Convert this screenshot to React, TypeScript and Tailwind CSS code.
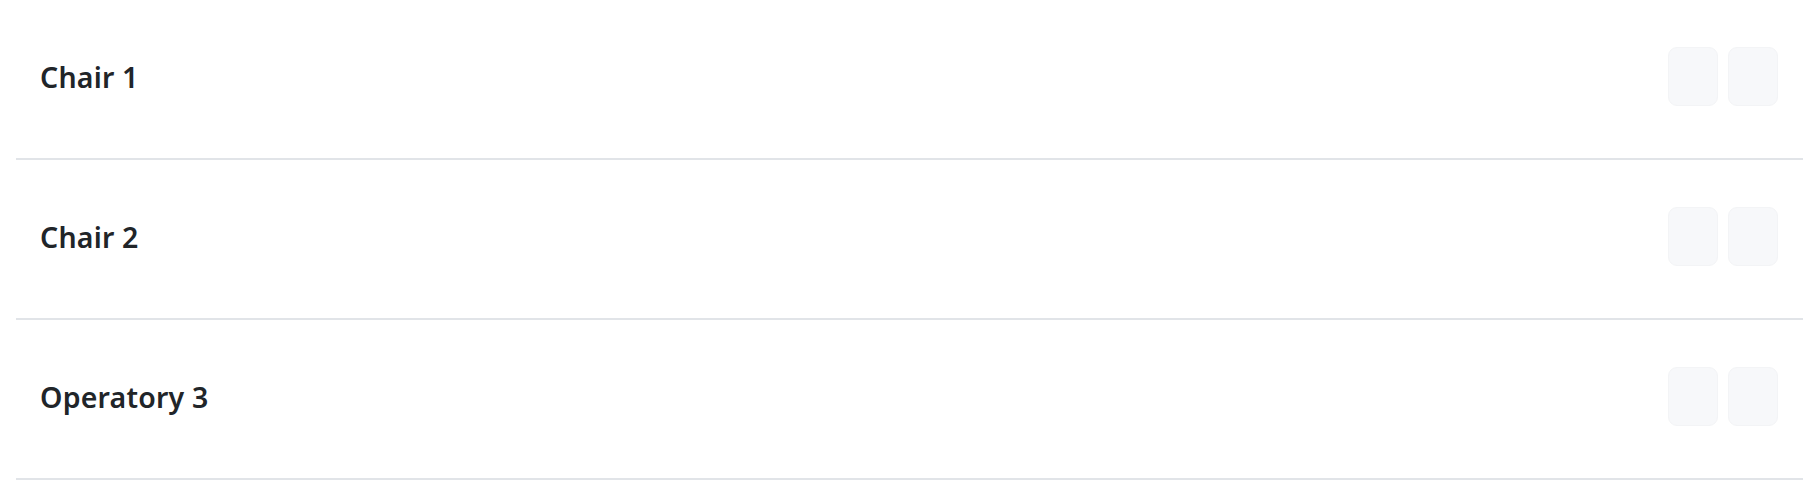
import React from "react";

const rows = ["Chair 1", "Chair 2", "Operatory 3"];

export default function App() {
  return (
    <div
      className="w-[1820px] h-[480px] bg-white overflow-hidden"
      style={{ fontFamily: '"Noto Sans", "Open Sans", sans-serif' }}
    >
      <div className="ml-4 mr-[17px]">
        {rows.map((r) => (
          <div
            key={r}
            className="flex items-center justify-between h-[160px] pt-[48px] pb-[53px] pl-6 pr-[25px] border-b-2 border-[#e1e4e8]"
          >
            <span className="text-[28.5px] leading-[59px] pt-[2px] font-semibold tracking-[0.2px] text-[#212529]">
              {r}
            </span>
            <div className="flex gap-[10px]">
              <button className="w-[50px] h-[59px] rounded-[9px] bg-[#f7f8fa] border border-[#f3f4f6]" />
              <button className="w-[50px] h-[59px] rounded-[9px] bg-[#f7f8fa] border border-[#f3f4f6]" />
            </div>
          </div>
        ))}
      </div>
    </div>
  );
}
